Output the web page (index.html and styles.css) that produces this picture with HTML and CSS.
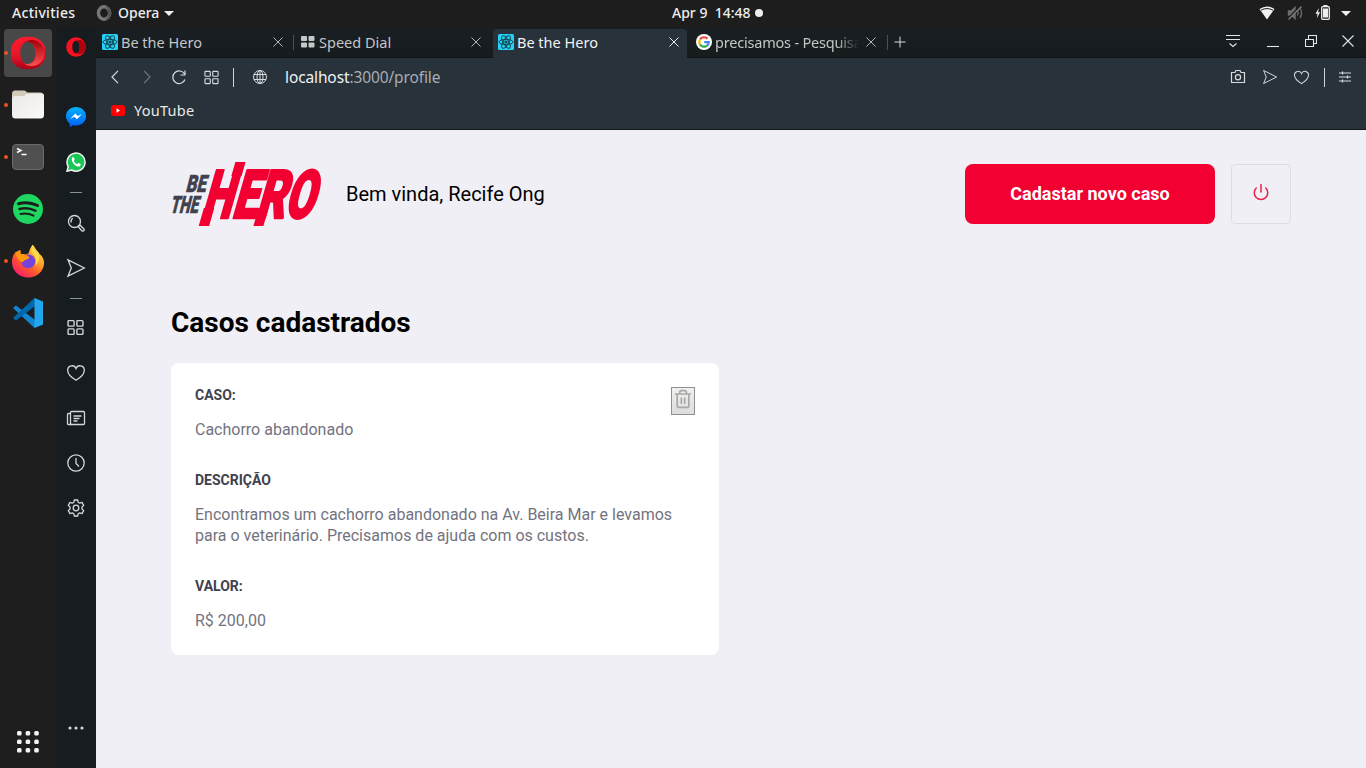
FILE: index.html
```html
<!DOCTYPE html>
<html lang="pt-BR">
<head>
<meta charset="utf-8">
<title>Be the Hero</title>
<link rel="stylesheet" href="styles.css">
</head>
<body>
<svg class="defs" width="0" height="0" aria-hidden="true">
  <defs>
    <linearGradient id="operaRing" x1="0" y1="0" x2="0" y2="1"><stop offset="0" stop-color="#ff1b2d"/><stop offset=".6" stop-color="#e51529"/><stop offset="1" stop-color="#a70014"/></linearGradient>
    <linearGradient id="operaSide" x1="0" y1="0" x2="0" y2="1"><stop offset="0" stop-color="#a30008"/><stop offset="1" stop-color="#ff5252"/></linearGradient>
    <linearGradient id="folder" x1="0" y1="0" x2="1" y2="1"><stop offset="0" stop-color="#e9e8e4"/><stop offset="1" stop-color="#fbfaf8"/></linearGradient>
    <linearGradient id="fox" x1="1" y1="0" x2=".2" y2="1"><stop offset="0" stop-color="#fff44f"/><stop offset=".35" stop-color="#ffb02e"/><stop offset=".65" stop-color="#ff5a2c"/><stop offset="1" stop-color="#f5156c"/></linearGradient>
    <linearGradient id="msg" x1="0" y1="0" x2="0" y2="1"><stop offset="0" stop-color="#00b2ff"/><stop offset="1" stop-color="#0060f5"/></linearGradient>
    <symbol id="react" viewBox="0 0 16 16"><rect width="16" height="16" rx="1.5" fill="#22d3f5"/><g fill="none" stroke="#164450" stroke-width="1"><ellipse cx="8" cy="8" rx="7" ry="2.7"/><ellipse cx="8" cy="8" rx="7" ry="2.7" transform="rotate(60 8 8)"/><ellipse cx="8" cy="8" rx="7" ry="2.7" transform="rotate(120 8 8)"/></g><circle cx="8" cy="8" r="1.5" fill="#164450"/></symbol>
    <symbol id="close" viewBox="0 0 10 10"><path d="M.5.5l9 9M9.5.5l-9 9"/></symbol>
    <symbol id="grid" viewBox="0 0 16 16"><rect x="1" y="1.5" width="5.7" height="5.2" rx=".8"/><rect x="9.3" y="1.5" width="5.7" height="5.2" rx=".8"/><rect x="1" y="9.3" width="5.7" height="5.2" rx=".8"/><rect x="9.3" y="9.3" width="5.7" height="5.2" rx=".8"/></symbol>
    <symbol id="heart" viewBox="0 0 20 20"><path d="M10 17.200C6.800 15.300 1.700 11.500 1.700 7.200c0-5 6.600-6 8.300-1.700 1.700-4.300 8.300-3.300 8.300 1.700 0 4.300-5.100 8.100-8.300 10z"/></symbol>
    <symbol id="send" viewBox="0 0 20 20"><path d="M2 1.800L18.300 10 2 18.200l3.300-8.200z"/></symbol>
  </defs>
</svg>

<header class="topbar">
  <div class="topbar-left">
    <span class="activities">Activities</span>
    <svg class="app-icon" width="16" height="16" viewBox="0 0 16 16"><ellipse cx="8" cy="8" rx="5.600" ry="6.200" fill="none" stroke="#777" stroke-width="3.400"/><path d="M8 .4a7.500 7.500 0 0 1 0 15.200c3-1 4-4 4-7.600S11 1.400 8 .4z" fill="#555"/></svg>
    <span class="app-name">Opera</span>
    <svg width="10" height="5" viewBox="0 0 10 5"><path d="M0 0h10L5 5z" fill="#eee"/></svg>
  </div>
  <div class="clock"><span>Apr 9&nbsp; 14:48</span><i></i></div>
  <svg class="status" width="96" height="20" viewBox="1258 3 96 20">
    <path d="M1259.500 9q7.500-5 15 0L1267 19.500z" fill="#f1f1f1"/><path d="M1261 10.200q6-3.300 12 0" fill="none" stroke="#1d1d1d" stroke-width="1"/>
    <g fill="none" stroke="#6c6c6c" stroke-width="1.400"><path d="M1288.500 11h3l3.500-3.500v11l-3.500-3.500h-3z" fill="#6c6c6c"/><path d="M1297.500 10.500q1.500 2.500 0 5M1300 8q3 5 0 10"/></g><path d="M1288 19l13-13" stroke="#1d1d1d" stroke-width="2.400"/><path d="M1288.500 19.500l13-13" stroke="#808080" stroke-width="1.200"/>
    <path d="M1318.800 8l-3.300 5.800h2l-.7 4.500 3.300-6h-2z" fill="#eee"/><rect x="1321.700" y="6.700" width="7.600" height="12.600" rx="1" fill="none" stroke="#eee" stroke-width="1.300"/><path d="M1323 8.500h5v9h-5zM1323.500 5h4v1.500h-4z" fill="#eee"/>
    <path d="M1341 11h10l-5 5z" fill="#eee"/>
  </svg>
</header>

<div class="desktop">
  <nav class="dock">
    <div class="dock-item active running"><svg width="34" height="34" viewBox="0 0 34 34"><path fill-rule="evenodd" d="M17 .8a16.300 16.300 0 1 0 0 32.400A16.300 16.300 0 1 0 17 .8zm0 4.800c4.200 0 7.300 5.200 7.300 11.400S21.200 28.400 17 28.400 9.200 23.200 9.200 17 12.800 5.600 17 5.600z" fill="url(#operaRing)"/><path d="M12 7.500C19 .5 33 4 33.200 17 33 30 19 33.500 12 26.500c6 4.500 13.300-1.200 13.300-9.500S18 3 12 7.500z" fill="url(#operaSide)"/></svg></div>
    <div class="dock-item running"><svg width="34" height="34" viewBox="0 0 34 34"><path d="M1 6q0-3.500 3-3.500h9q2 0 3 2h13q4 0 4 3.500v8H1z" fill="#d2cab9"/><path d="M1 11q0-3 3-3h9l3-2.500h14q3 0 3 3V27q0 3.500-3.500 3.500h-25Q1 30.500 1 27z" fill="url(#folder)"/></svg></div>
    <div class="dock-item running"><svg width="34" height="34" viewBox="0 0 34 34"><rect x="1.500" y="4.500" width="31" height="25" rx="3.500" fill="#505050" stroke="#6a6a6a"/><path d="M6 8.500l4 2-4 2M10.500 14.500h5" fill="none" stroke="#fff" stroke-width="1.400"/></svg></div>
    <div class="dock-item"><svg width="34" height="34" viewBox="0 0 34 34"><circle cx="17" cy="17" r="15" fill="#1ed760"/><g fill="none" stroke="#1d1d1d" stroke-linecap="round"><path d="M7.500 11.700q10-2.600 19 1.800" stroke-width="3"/><path d="M8.500 17q8.500-2 16 1.800" stroke-width="2.400"/><path d="M9.500 22q7-1.500 13 1.700" stroke-width="2"/></g></svg></div>
    <div class="dock-item running"><svg width="34" height="34" viewBox="0 0 34 34"><path d="M21.500.8c2.300 2 3.200 4.500 3.500 6.500 2-.2 2.700 1 3 2.200 3 2 5.200 5.500 5 10-.3 8-7.500 14-15.700 14C8 33.500 1 26.800 1 18.300c0-4.500 1.500-8.800 4.200-10.800v2.200L9.500 6l-.3 4.700h5l3.500-1.500C18.500 6 20 3 21.500.8z" fill="url(#fox)"/><circle cx="17.200" cy="17.300" r="7" fill="#7543d9"/><path d="M5 8l4-2 1 4.300c3-1 6 0 8.500 3.500-1 1.800-5 1.500-6.800 4.500C8.500 18 5 14 5 8z" fill="#ff980e"/><path d="M21.500 1c-2 3-1.500 7 1.500 10 3 4 2 8 1 11 5-4 5-11 3-14z" fill="#ffd84b"/></svg></div>
    <div class="dock-item"><svg width="34" height="34" viewBox="0 0 34 34"><path d="M2 12l3-2.500L28 27l-4.500 5z" fill="#1286d3"/><path d="M2 22l3 2.500L28 7l-4.500-5z" fill="#0069ac"/><path d="M23.500 2L32 5.500v23L23.500 32z" fill="#24a6ef"/></svg></div>
    <svg class="apps" width="22" height="22" viewBox="0 0 22 22" fill="#f3f3f3"><g id="appsRow"><rect width="4.600" height="4.600" rx="1.500"/><rect x="8.600" width="4.600" height="4.600" rx="1.500"/><rect x="17.200" width="4.600" height="4.600" rx="1.500"/></g><use href="#appsRow" y="8.500"/><use href="#appsRow" y="17"/></svg>
  </nav>

  <nav class="sidebar">
    <div class="side-item side-opera"><svg width="20" height="20" viewBox="0 0 20 20"><path fill-rule="evenodd" d="M10 .2a9.700 9.700 0 1 0 0 19.600A9.700 9.700 0 1 0 10 .2zm0 3.500c2.300 0 3.700 2.800 3.700 6.300s-1.400 6.300-3.700 6.300S6.300 13.500 6.300 10 7.700 3.700 10 3.700z" fill="#fa1020"/><path d="M10 3.700c3-1.300 5.500-.5 7 .6 3.500 3 3.500 8.400 0 11.400-1.500 1.100-4 1.900-7 .6 2.300 0 3.700-2.800 3.700-6.300S12.300 3.700 10 3.700z" fill="#b0000c"/></svg></div>
    <div class="side-item"><svg width="20" height="20" viewBox="0 0 20 20"><path d="M10 0C4.300 0 0 4 0 9.300c0 3 1.400 5.500 3.700 7.200V20l3.200-1.800c1 .3 2 .4 3.100.4 5.700 0 10-4 10-9.300S15.700 0 10 0z" fill="url(#msg)"/><path d="M4 12l5.300-5.500 2.500 2.500L16 7l-5 5.300-2.700-2.500z" fill="#fff"/></svg></div>
    <div class="side-item"><svg width="20" height="20" viewBox="0 0 20 20"><path d="M1 19.200l1.200-4.700A9 9 0 1 1 5.700 18z" fill="#19c657" stroke="#f3f3f3" stroke-width="1.500"/><path d="M6 5.700c.6-.8 1.600-.8 1.900 0l.7 1.600c.2.600-.7 1.200-.8 1.600.8 1.500 1.800 2.500 3.400 3.200.5-.3.900-1.300 1.500-1.100l1.700.9c.7.500-.1 2.300-1.200 2.600C10 15.300 4.500 10 6 5.700z" fill="#fff"/></svg></div>
    <div class="side-dash"></div>
    <div class="side-item"><svg class="line" width="20" height="20" viewBox="0 0 20 20"><circle cx="8.500" cy="8.500" r="6"/><path d="M5.300 9.500a3.600 3.600 0 0 1 1.500-4.300M12.200 13.700l1.700-1.700 4 4q.8 1-.2 1.700t-1.700.2z"/></svg></div>
    <div class="side-item"><svg class="line" width="20" height="20"><use href="#send"/></svg></div>
    <div class="side-dash short"></div>
    <div class="side-item"><svg class="line" width="17" height="17"><use href="#grid"/></svg></div>
    <div class="side-item"><svg class="line" width="20" height="20"><use href="#heart"/></svg></div>
    <div class="side-item"><svg class="line" width="20" height="20" viewBox="0 0 20 20"><rect x="4.500" y="3.500" width="14" height="13" rx="1"/><path d="M4.500 5.500h-2q-1 0-1 1v9q0 1 1 1h3M7.500 8h8M7.500 10.500h6M7.500 13h4"/></svg></div>
    <div class="side-item"><svg class="line" width="20" height="20" viewBox="0 0 20 20"><circle cx="10" cy="10" r="8.200"/><path d="M10 5v5.500l3 3"/></svg></div>
    <div class="side-item"><svg class="line" width="20" height="20" viewBox="0 0 20 20"><circle cx="10" cy="10" r="2.800"/><path d="M8.300 2h3.400l.5 2.300 1.500.9 2.300-.8 1.700 3L16 9v2l1.700 1.600-1.700 3-2.300-.8-1.500.9-.5 2.300H8.300l-.5-2.300-1.500-.9-2.300.8-1.700-3L4 11V9L2.300 7.400l1.700-3 2.300.8 1.500-.9z" stroke-linejoin="round"/></svg></div>
    <svg class="side-more" width="16" height="4" viewBox="0 0 16 4" fill="#d4d8da"><circle cx="2" cy="2" r="1.600"/><circle cx="8" cy="2" r="1.600"/><circle cx="14" cy="2" r="1.600"/></svg>
  </nav>

  <section class="browser">
    <div class="tabs">
      <div class="tab first"><svg width="16" height="16"><use href="#react"/></svg><span class="tab-title">Be the Hero</span><svg class="x" width="10" height="10"><use href="#close"/></svg></div>
      <div class="tab second"><svg width="14" height="12" viewBox="0 0 14 12" fill="#c5c8c9"><rect width="6" height="5" rx="1"/><rect x="7.500" width="6" height="5" rx="1"/><rect y="6.500" width="6" height="5" rx="1"/><rect x="7.500" y="6.500" width="6" height="5" rx="1"/></svg><span class="tab-title">Speed Dial</span><svg class="x" width="10" height="10"><use href="#close"/></svg></div>
      <div class="tab selected"><svg width="16" height="16"><use href="#react"/></svg><span class="tab-title">Be the Hero</span><svg class="x" width="10" height="10"><use href="#close"/></svg></div>
      <div class="tab last"><svg width="16" height="16" viewBox="0 0 16 16"><circle cx="8" cy="8" r="8" fill="#fff"/><g fill="none" stroke-width="2.200"><path d="M4 5.500A4.700 4.700 0 0 1 11.500 4.800" stroke="#ea4335"/><path d="M4 5.500a4.700 4.700 0 0 0 0 5" stroke="#fbbc05"/><path d="M4 10.500a4.700 4.700 0 0 0 7 1.200" stroke="#34a853"/><path d="M11 11.700A4.500 4.500 0 0 0 12.700 8.200H8.200" stroke="#4285f4"/></g></svg><span class="tab-title fade">precisamos - Pesquisa</span><svg class="x" width="10" height="10"><use href="#close"/></svg></div>
      <svg class="plus" width="12" height="12" viewBox="0 0 12 12"><path d="M6 .5v11M.5 6h11"/></svg>
      <div class="window-buttons">
        <svg width="16" height="14" viewBox="0 0 16 14"><path d="M1 1.500h14M1 5.500h14M4.500 9.500L8 12.500l3.500-3"/></svg>
        <svg width="12" height="12" viewBox="0 0 12 12"><path d="M0 10.500h12"/></svg>
        <svg width="12" height="12" viewBox="0 0 12 12"><path d="M.5 4.500h8v7h-8zM3.500 4V.5h8v8H9"/></svg>
        <svg width="12" height="12" viewBox="0 0 12 12"><path d="M.5.5l11 11M11.500.5l-11 11"/></svg>
      </div>
    </div>

    <div class="address">
      <svg class="back" width="8" height="14" viewBox="0 0 8 14"><path d="M7 .8L1 7l6 6.200"/></svg>
      <svg class="forward" width="8" height="14" viewBox="0 0 8 14"><path d="M1 .8L7 7l-6 6.200"/></svg>
      <svg class="reload" width="16" height="16" viewBox="0 0 16 16"><path d="M14 10.500A6.300 6.300 0 1 1 13.500 5M14 1.500V6H9.500"/></svg>
      <svg class="dial" width="15" height="15"><use href="#grid"/></svg>
      <i class="bar"></i>
      <svg class="globe" width="16" height="16" viewBox="0 0 16 16"><circle cx="8" cy="8" r="6.500"/><ellipse cx="8" cy="8" rx="3" ry="6.500"/><path d="M2 5.500h12M2 10.500h12M8 1.500v13"/></svg>
      <div class="url"><b>localhost</b>:3000/profile</div>
      <div class="address-tools">
        <svg width="16" height="16" viewBox="0 0 16 16"><path d="M1.500 3.500H5l1-2h4l1 2h3.500v10h-13z"/><circle cx="8" cy="8.200" r="2.600"/></svg>
        <svg width="16" height="16"><use href="#send"/></svg>
        <svg width="17" height="17"><use href="#heart"/></svg>
        <i class="bar"></i>
        <svg class="sliders" width="12" height="12" viewBox="0 0 12 12"><path d="M0 2h12M0 6h12M0 10h12M3.500.5v3M8.500 4.500v3M3.500 8.500v3"/></svg>
      </div>
    </div>

    <div class="bookmarks"><svg width="14" height="11" viewBox="0 0 14 11"><rect width="14" height="11" rx="2.500" fill="red"/><path d="M5.500 3.200L9 5.500 5.500 7.800z" fill="#fff"/></svg><span>YouTube</span></div>

    <main class="page">
      <div class="profile">
        <header class="profile-header">
          <svg class="logo" width="152" height="64" viewBox="171 162 152 64" role="img" aria-label="Be the Hero">
            <g class="logo-small" transform="translate(0 213) skewX(-14)">
              <text x="180" y="-21.500" textLength="20" lengthAdjust="spacingAndGlyphs">BE</text>
              <text x="169.500" y="0" textLength="28" lengthAdjust="spacingAndGlyphs">THE</text>
            </g>
            <g class="logo-big" transform="translate(0 218) skewX(-16)">
              <text x="200.500" textLength="30" lengthAdjust="spacingAndGlyphs">H</text>
              <text x="231" textLength="25" lengthAdjust="spacingAndGlyphs">E</text>
              <text x="255" textLength="29" lengthAdjust="spacingAndGlyphs">R</text>
              <text x="283.500" textLength="29" lengthAdjust="spacingAndGlyphs">O</text>
              <path d="M201-10h10.400V8H201zM219.300-56h10.200v14h-10.200zM255.700-10h10V8h-10z"/>
            </g>
          </svg>
          <span class="welcome">Bem vinda, Recife Ong</span>
          <a class="new-case">Cadastar novo caso</a>
          <button class="logout" type="button"><svg width="18" height="18" viewBox="0 0 24 24"><path d="M18.360 6.640a9 9 0 1 1-12.730 0M12 2v10"/></svg></button>
        </header>
        <h1>Casos cadastrados</h1>
        <ul class="cases">
          <li>
            <div class="case-text">
              <strong>CASO:</strong><p>Cachorro abandonado</p>
              <strong>DESCRIÇÃO</strong><p>Encontramos um cachorro abandonado na Av. Beira Mar e levamos para o veterinário. Precisamos de ajuda com os custos.</p>
              <strong>VALOR:</strong><p>R$ 200,00</p>
            </div>
            <button class="trash" type="button"><svg width="20" height="20" viewBox="0 0 24 24"><path d="M3 6h18M19 6v14a2 2 0 0 1-2 2H7a2 2 0 0 1-2-2V6m3 0V4a2 2 0 0 1 2-2h4a2 2 0 0 1 2 2v2M10 11v6M14 11v6"/></svg></button>
          </li>
        </ul>
      </div>
    </main>
  </section>
</div>
</body>
</html>
```
FILE: styles.css
```css
* { box-sizing: border-box; margin: 0; padding: 0; }
body { width: 1366px; height: 768px; overflow: hidden; background: #1d1d1d; font-family: "Noto Sans", "Open Sans", sans-serif; }
svg { display: block; flex: none; }
.defs { position: absolute; }
.topbar { height: 28px; display: grid; grid-template-columns: 592px auto 1fr; align-items: center; color: #eee; font-size: 14px; font-weight: 500; padding: 0 12px 2px; line-height: 26px; }
.topbar-left { display: flex; align-items: center; }
.activities { width: 84px; letter-spacing: .3px; }
.app-name { margin: 0 5px 0 6px; }
.clock { display: flex; align-items: center; gap: 4px; margin-left: 68px; }
.clock i { width: 8px; height: 8px; border-radius: 50%; background: #eee; }
.status { justify-self: end; }
.desktop { display: flex; height: 740px; }
.dock { width: 56px; background: #1e1e1e; display: flex; flex-direction: column; padding: 1px 4px 15px; gap: 4px; }
.dock-item { position: relative; width: 48px; height: 48px; display: flex; align-items: center; justify-content: center; border-radius: 4px; }
.dock-item.active { background: #484848; }
.running::before { content: ""; position: absolute; left: 0; top: 22px; width: 4px; height: 4px; border-radius: 50%; background: #e95420; }
.apps { margin: auto 0 0 13px; }
.sidebar { width: 40px; background: #171c20; display: flex; flex-direction: column; align-items: center; padding-right: 1px; }
.side-item { height: 45px; display: flex; align-items: center; justify-content: center; }
.side-opera { height: 38px; margin-bottom: 28px; }
.line { fill: none; stroke: #d2d7da; stroke-width: 1.300; }
.side-dash { width: 12px; height: 16px; background: linear-gradient(#8595a0, #8595a0) center / 12px 1px no-repeat; }
.side-dash.short { height: 15px; background-position: 0 8px; }
.side-more { margin: auto 0 38px; }
.browser { flex: 1; min-width: 0; display: flex; flex-direction: column; background: #27323b; }
.tabs { height: 30px; display: flex; align-items: center; background: linear-gradient(#191f23, #171b1e); border-bottom: 1px solid #101417; color: #c3c5c6; font-size: 14.500px; }
.tab { height: 30px; display: flex; align-items: center; padding: 0 11.500px 1px 6px; position: relative; }
.tab-title { flex: 1; margin-left: 3px; overflow: hidden; white-space: nowrap; line-height: 24px; }
.first { width: 198px; }
.second { width: 199px; padding: 0 12.500px 1px 7px; }
.second .tab-title { margin-left: 4px; }
.first::after, .last::after { content: ""; position: absolute; right: 0; top: 7px; width: 1px; height: 15px; background: #4a5053; }
.selected { width: 194px; background: #27323b; border-radius: 4px 4px 0 0; color: #f2f3f3; padding: 0 8.500px 2px 5px; margin-top: 1px; height: 29px; }
.last { width: 201px; padding-left: 9px; }
.fade { flex: 0 0 144px; margin-right: 7px; letter-spacing: -.2px; -webkit-mask-image: linear-gradient(90deg, #000 84%, transparent); mask-image: linear-gradient(90deg, #000 84%, transparent); }
.x { fill: none; stroke: #b3b6b8; stroke-width: 1; }
.selected .x { stroke: #eee; }
.plus { margin: 0 0 2px 6px; fill: none; stroke: #d9dbdc; }
.window-buttons { flex: 1; display: flex; justify-content: flex-end; align-items: center; gap: 26px; padding: 0 12px 3px 0; fill: none; stroke: #e3e5e6; stroke-width: 1.100; }
.window-buttons svg:nth-child(2) { margin-top: 1px; }
.window-buttons svg:nth-child(3) { margin-right: -1px; }
.address { height: 38px; display: flex; align-items: center; fill: none; stroke: #d7dbdd; stroke-width: 1.200; }
.back { margin-left: 15px; }
.forward { margin-left: 24px; opacity: .4; }
.reload { margin-left: 20px; }
.dial { margin-left: 17px; }
.bar { width: 1px; height: 19px; background: #d0d4d6; }
.dial + .bar { margin-left: 14px; }
.globe { margin-left: 18px; stroke-width: 1; }
.url { margin-left: 17px; color: #a7adb1; font-size: 15.500px; letter-spacing: -.12px; line-height: 24px; }
.url b { font-weight: 400; color: #f0f1f2; }
.address-tools { margin-left: auto; padding-right: 15px; display: flex; align-items: center; }
.address-tools svg + svg { margin-left: 16px; }
.address-tools svg:nth-child(3) { margin-left: 15px; }
.address-tools .bar { margin: 0 14px; }
.bookmarks { height: 34px; display: flex; align-items: center; padding: 0 15px 5px; gap: 9px; color: #e7e9ea; font-size: 14.500px; letter-spacing: .25px; line-height: 19px; border-bottom: 1px solid #14191d; }
.page { flex: 1; background: #f0eff5; color: #000; font-family: Roboto, sans-serif; }
.profile { width: 1120px; margin: 0 auto; padding-top: 32px; }
.profile-header { height: 64px; display: flex; align-items: center; }
.logo { overflow: visible; }
.logo-small { font: 900 24px Roboto, sans-serif; fill: #41414d; stroke: #41414d; stroke-width: .6; }
.logo-big { font: 900 67px Roboto, sans-serif; fill: #f20032; stroke: #f20032; stroke-width: 2.600; stroke-linejoin: round; }
.logo-big path { stroke: none; }
.welcome { font-size: 20px; margin-left: 23px; }
.new-case { width: 250px; height: 60px; margin-left: auto; background: #f20032; color: #fff; border-radius: 8px; font-size: 18px; font-weight: 700; line-height: 60px; text-align: center; }
.logout { width: 60px; height: 60px; margin-left: 16px; border: 1px solid #dcdce6; border-radius: 4px; background: transparent; display: flex; align-items: center; justify-content: center; padding-bottom: 4px; }
.logout svg { fill: none; stroke: #e8204c; stroke-width: 2; stroke-linecap: round; }
h1 { font-size: 28px; line-height: 33px; margin: 80px 0 24px; }
.cases { display: grid; grid-template-columns: 548px 548px; gap: 24px; list-style: none; }
.cases li { background: #fff; border-radius: 8px; padding: 24px; display: flex; align-items: flex-start; justify-content: space-between; }
.case-text { width: 485px; margin-right: -9px; }
.case-text strong { display: block; color: #41414d; font-size: 14px; line-height: 16px; }
.case-text p { color: #737380; font-size: 16px; line-height: 21px; margin: 16px 0 32px; }
.case-text p:last-child { margin-bottom: 0; }
.trash { width: 24px; height: 28px; border: 1px solid #8f8f8f; background: linear-gradient(#f0f0f0, #ddd); display: flex; justify-content: center; padding-top: 1px; }
.trash svg { fill: none; stroke: #a8a8a4; stroke-width: 2; stroke-linecap: round; }
```
